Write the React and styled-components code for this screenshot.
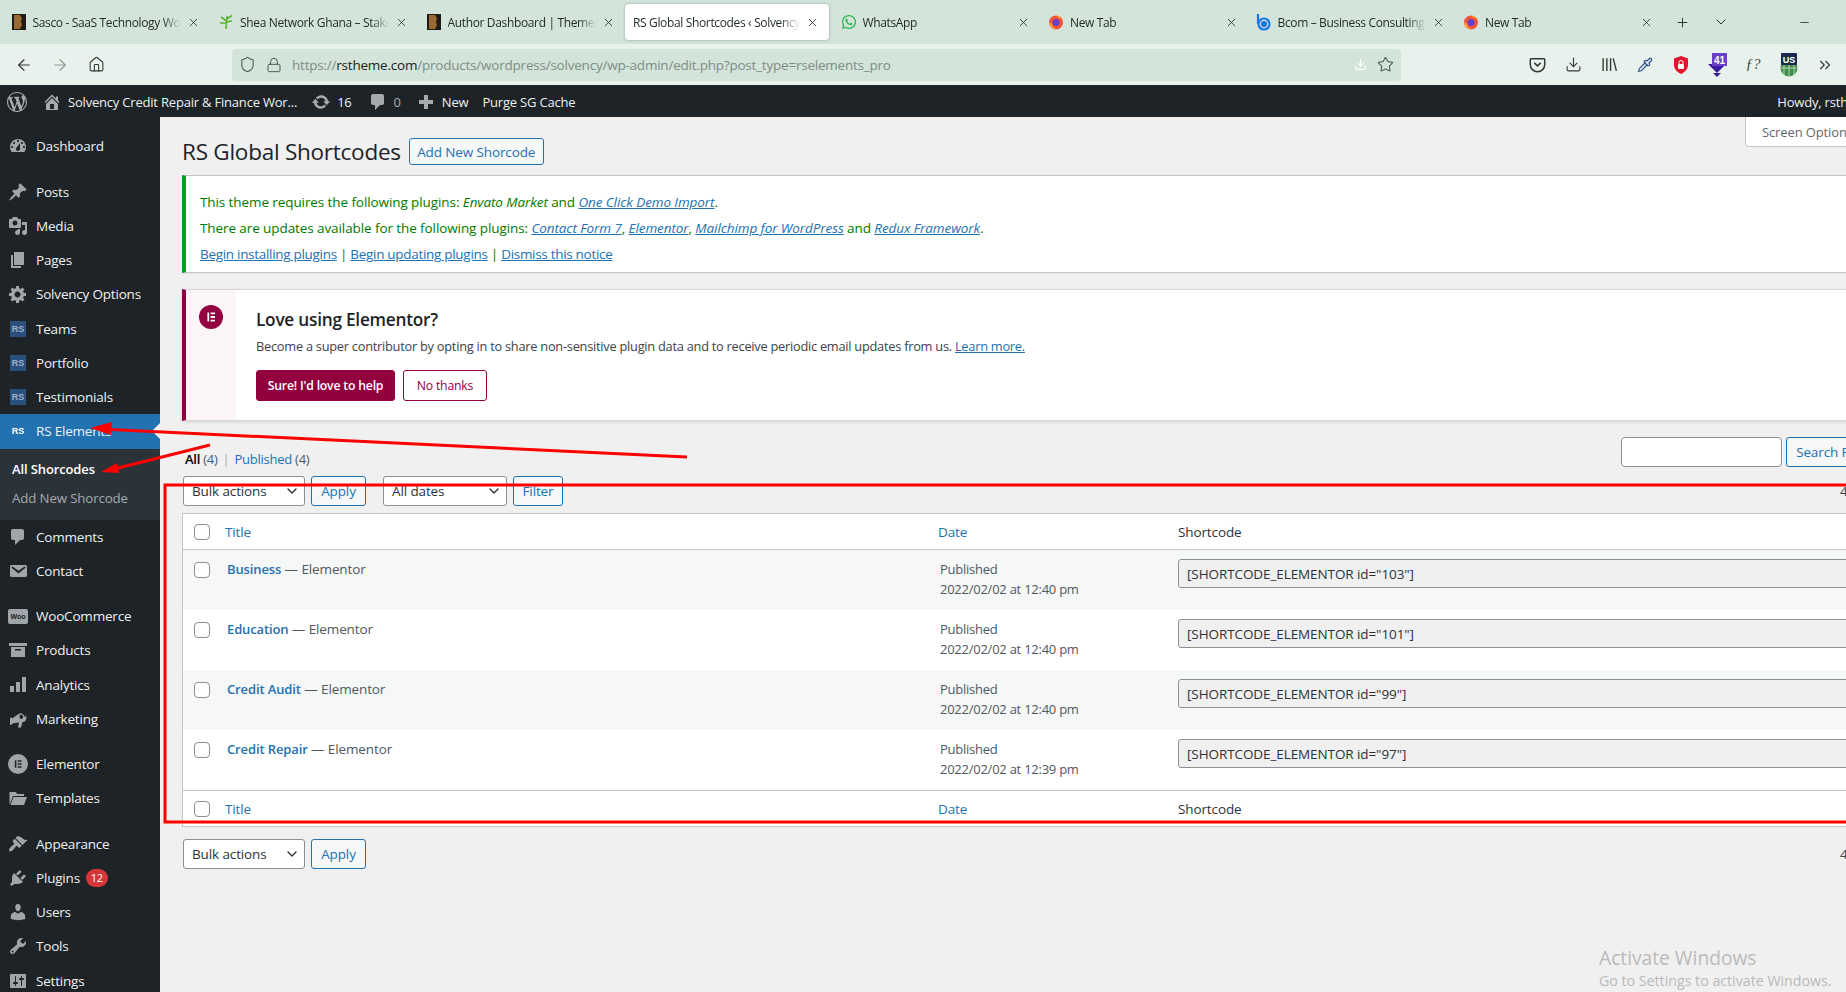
import React from "react";
import styled, { createGlobalStyle } from "styled-components";
import {
  ArrowLeft,
  ArrowRight,
  ChevronDown,
  ChevronsRight,
  Download,
  Home,
  Lock,
  Minus,
  Pipette,
  Plus,
  Shield,
  Star,
  X
} from "lucide-react";
import { FaWhatsapp } from "react-icons/fa";

const GlobalStyle = createGlobalStyle`
  html, body {
    margin: 0;
    height: 100%;
    overflow: hidden;
    background: #f0f0f1;
  }
  body {
    font-family: "Open Sans", "Noto Sans", sans-serif;
    font-size: 13.5px;
    letter-spacing: -0.12px;
    color: #3c434a;
  }
  * { box-sizing: border-box; }
`;

const Page = styled.div`
  position: relative;
  width: 1846px;
  height: 992px;
  overflow: hidden;
  display: flex;
  flex-direction: column;
`;

/* browser chrome */

const TabBar = styled.div`
  height: 44px;
  flex: none;
  display: flex;
  align-items: center;
  padding-left: 2.5px;
  background: #d3e4da;
`;

const Tab = styled.div`
  width: ${p => (p.$active ? "204px" : "207.5px")};
  margin-right: ${p => (p.$active ? "3.5px" : "0")};
  height: 36px;
  flex: none;
  display: flex;
  align-items: center;
  gap: 6px;
  padding: 0 10px 0 8px;
  border-radius: 4px;
  background: ${p => (p.$active ? "#fff" : "transparent")};
  box-shadow: ${p => (p.$active ? "0 0 3px rgba(0,0,0,.3)" : "none")};
  color: #1f2a24;
  font-size: 12px;
  letter-spacing: -0.35px;
`;

const TabTitle = styled.span`
  flex: 1;
  min-width: 0;
  white-space: nowrap;
  overflow: hidden;
  -webkit-mask-image: linear-gradient(to right, #000 88%, transparent);
  mask-image: linear-gradient(to right, #000 88%, transparent);
`;

const TabActions = styled.div`
  display: flex;
  align-items: center;
  color: #26332c;
`;

const TabAction = styled.span`
  width: 39px;
  display: flex;
  justify-content: center;
`;

const MinimizeAction = styled(TabAction)`
  margin-left: 44px;
`;

const Toolbar = styled.div`
  height: 41px;
  flex: none;
  display: flex;
  align-items: center;
  padding-left: 6px;
  background: #e8f1ec;
  color: #2b3a32;
`;

const ToolIcon = styled.span`
  width: 36px;
  height: 30px;
  flex: none;
  display: flex;
  align-items: center;
  justify-content: center;
  color: ${p => p.$color || "inherit"};
`;

const UrlBar = styled.div`
  width: 1169px;
  height: 32px;
  margin: 0 118px 0 118px;
  flex: none;
  display: flex;
  align-items: center;
  gap: 10px;
  padding: 0 7px;
  border-radius: 4px;
  background: #d3e4da;
  color: #4a5a51;
`;

const UrlText = styled.span`
  flex: 1;
  font-size: 13.5px;
  letter-spacing: -0.22px;
  color: #7f8d85;
  white-space: nowrap;
  b {
    font-weight: 400;
    color: #222;
  }
`;

const AdminBar = styled.div`
  height: 32px;
  flex: none;
  display: flex;
  align-items: center;
  padding-top: 1px;
  background: #1d2327;
  color: #f0f0f1;
  font-size: 13px;
  letter-spacing: -0.2px;
  white-space: nowrap;
  svg {
    flex: none;
    fill: #a7aaad;
  }
`;

const AdminItem = styled.span`
  display: flex;
  align-items: center;
  margin-left: ${p => p.$left || 0}px;
  color: ${p => (p.$muted ? "#a7aaad" : "inherit")};
`;

const Dash = ({ d, size = 20 }) => (
  <svg width={size} height={size} viewBox="0 0 20 20">
    <path d={d} />
  </svg>
);

/* wp sidebar */

const Body = styled.div`
  flex: 1;
  min-height: 0;
  display: flex;
`;

const Sidebar = styled.nav`
  width: 160px;
  flex: none;
  padding-top: 12.25px;
  background: #1d2327;
`;

const MenuItem = styled.div`
  position: relative;
  height: 34.25px;
  margin-top: ${p => (p.$sep ? "11px" : "0")};
  display: flex;
  align-items: center;
  padding-left: 8px;
  gap: 8px;
  font-size: 13.5px;
  letter-spacing: -0.2px;
  color: #f0f0f1;
  background: ${p => (p.$active ? "#2271b1" : "transparent")};
  svg {
    flex: none;
    fill: #a0a5aa;
  }
  &::after {
    content: ${p => (p.$active ? '""' : "none")};
    position: absolute;
    right: 0;
    top: 9px;
    border: 8px solid transparent;
    border-right-color: #f0f0f1;
  }
`;

const RsBadge = styled.span`
  width: 16px;
  height: 16px;
  margin: 0 2px;
  flex: none;
  display: flex;
  align-items: center;
  justify-content: center;
  background: ${p => (p.$active ? "transparent" : "#2b4f7e")};
  color: ${p => (p.$active ? "#fff" : "#9fb0c6")};
  font: 700 9px "Liberation Sans", sans-serif;
  letter-spacing: 0;
`;

const WooBadge = styled.span`
  width: 20px;
  height: 15px;
  flex: none;
  display: flex;
  align-items: center;
  justify-content: center;
  border-radius: 2px;
  background: #a0a5aa;
  color: #1d2327;
  font: 700 7px "Liberation Sans", sans-serif;
  letter-spacing: 0;
`;

const ElementorRound = styled.span`
  width: ${p => p.$size}px;
  height: ${p => p.$size}px;
  flex: none;
  display: flex;
  align-items: center;
  justify-content: center;
  border-radius: 50%;
  background: ${p => p.$bg};
  svg {
    fill: ${p => p.$fg};
  }
`;

const CountBadge = styled.span`
  min-width: 22px;
  height: 18px;
  margin-left: -2px;
  display: flex;
  align-items: center;
  justify-content: center;
  border-radius: 9px;
  background: #d63638;
  color: #fff;
  font-size: 11px;
`;

const SubMenu = styled.div`
  height: 71px;
  display: flex;
  flex-direction: column;
  justify-content: center;
  gap: 10px;
  padding: 0 0 0 12px;
  background: #2c3338;
`;

const SubItem = styled.div`
  line-height: 19px;
  font-size: ${p => (p.$current ? "13px" : "13.25px")};
  font-weight: ${p => (p.$current ? 600 : 400)};
  color: ${p => (p.$current ? "#fff" : "#a7aaad")};
`;

/* content */

const Main = styled.main`
  position: relative;
  flex: 1;
  min-width: 0;
  overflow: hidden;
`;

const Wrap = styled.div`
  width: 1703px;
  margin-left: 22px;
  padding-top: 21px;
`;

const ScreenTab = styled.div`
  position: absolute;
  top: 0;
  left: 1585px;
  width: 130px;
  height: 30px;
  display: flex;
  align-items: center;
  padding-left: 16px;
  border: 1px solid #c3c4c7;
  border-top: 0;
  border-radius: 0 0 4px 4px;
  background: #fff;
  font-size: 13px;
  color: #646970;
`;

const HeadingRow = styled.div`
  display: flex;
  align-items: center;
  gap: 8px;
  height: 27px;
`;

const Title = styled.h1`
  margin: 0;
  font-size: 22.5px;
  font-weight: 400;
  letter-spacing: -0.25px;
  color: #1d2327;
`;

const OutlineButton = styled.span`
  height: ${p => p.$h || 30}px;
  width: ${p => (p.$w ? `${p.$w}px` : "auto")};
  flex: none;
  display: inline-flex;
  align-items: center;
  justify-content: center;
  border: 1px solid #2271b1;
  border-radius: 3px;
  background: #f6f7f7;
  color: #2271b1;
  white-space: nowrap;
`;

const TgmNotice = styled.div`
  height: 98px;
  margin-top: 10px;
  padding: 16px 0 0 14px;
  border: 1px solid #c3c4c7;
  border-width: 1px 0;
  border-left: 4px solid #00a32a;
  background: #fff;
  box-shadow: 0 1px 1px rgba(0, 0, 0, 0.04);
`;

const NoticeLine = styled.p`
  margin: 0 0 6px;
  line-height: 20px;
  letter-spacing: ${p => (p.$tight ? "-0.3px" : "-0.09px")};
  color: #007a00;
  em {
    font-style: italic;
  }
  a {
    color: #2271b1;
    text-decoration: underline;
  }
`;

const ElementorNotice = styled.div`
  height: 132px;
  margin-top: 16px;
  display: flex;
  border: 1px solid #d5d5d7;
  border-width: 1px 0;
  border-left: 4px solid #93003f;
  background: #fff;
  box-shadow: 0 1px 3px rgba(0, 0, 0, 0.12);
`;

const NoticeAside = styled.div`
  width: 50px;
  flex: none;
  display: flex;
  justify-content: center;
  padding-top: 15px;
  background: rgba(147, 0, 63, 0.04);
`;

const NoticeBody = styled.div`
  padding: 18px 0 0 20px;
`;

const NoticeTitle = styled.h3`
  margin: 0;
  line-height: 24px;
  font-size: 17.25px;
  font-weight: 600;
  letter-spacing: -0.25px;
  color: #1d2327;
`;

const NoticeText = styled.p`
  margin: 3px 0 0;
  line-height: 22px;
  font-size: 12.8px;
  letter-spacing: -0.25px;
  color: #3c434a;
  a {
    color: #2271b1;
    text-decoration: underline;
  }
`;

const NoticeButtons = styled.div`
  display: flex;
  gap: 8px;
  margin-top: 13px;
`;

const NoticeButton = styled.span`
  height: 31px;
  width: ${p => p.$w}px;
  display: flex;
  align-items: center;
  justify-content: center;
  border: 1px solid #93003f;
  border-radius: 3px;
  background: ${p => (p.$solid ? "#93003f" : "#fff")};
  color: ${p => (p.$solid ? "#fff" : "#93003f")};
  font-size: 12.25px;
  letter-spacing: -0.2px;
  font-weight: ${p => (p.$solid ? 600 : 400)};
`;

const SearchRow = styled.div`
  height: 30px;
  margin-top: 16px;
  display: flex;
  align-items: center;
`;

const Subsubsub = styled.div`
  flex: 1;
  padding: 13px 0 0 3px;
  font-size: 13px;
  letter-spacing: -0.25px;
  color: #50575e;
  b {
    font-weight: 600;
    color: #000;
  }
  a {
    color: #2271b1;
  }
  i {
    margin: 0 5px;
    font-style: normal;
    color: #a7aaad;
  }
`;

const SearchInput = styled.input`
  width: 161px;
  height: 30px;
  margin-right: 4px;
  padding: 0 8px;
  border: 1px solid #8c8f94;
  border-radius: 4px;
  background: #fff;
`;

const TableNav = styled.div`
  height: 30px;
  margin-top: ${p => p.$top}px;
  display: flex;
  align-items: center;
`;

const FakeSelect = styled.span`
  width: ${p => p.$w}px;
  height: 30px;
  margin: 0 6px 0 ${p => p.$left || 1}px;
  flex: none;
  display: flex;
  align-items: center;
  justify-content: space-between;
  padding: 0 4px 0 8px;
  border: 1px solid #8c8f94;
  border-radius: 3px;
  background: #fff;
  color: #2c3338;
`;

const ItemCount = styled.span`
  margin-left: auto;
  color: #3c434a;
`;

const Table = styled.div`
  margin-top: 7px;
  border: 1px solid #c3c4c7;
  background: #fff;
`;

const HeadRow = styled.div`
  height: 36px;
  display: grid;
  grid-template-columns: 44px 705px 238px 1fr;
  align-items: center;
  border-${p => p.$edge}: 1px solid #c3c4c7;
`;

const Row = styled.div`
  height: 60px;
  display: grid;
  grid-template-columns: 44px 705px 238px 1fr;
  align-items: start;
  background: ${p => (p.$odd ? "#f6f7f7" : "#fff")};
`;

const Check = styled.input.attrs({ type: "checkbox" })`
  appearance: none;
  width: 16px;
  height: 16px;
  margin: ${p => (p.$top ? "12px" : "0")} 0 0 11px;
  display: block;
  border: 1px solid #8c8f94;
  border-radius: 4px;
  background: #fff;
`;

const SortLink = styled.span`
  margin-left: ${p => p.$left || 0}px;
  color: #2271b1;
`;

const PlainHead = styled.span`
  margin-left: 8px;
  color: #2c3338;
`;

const TitleCell = styled.div`
  padding-top: 9px;
  line-height: 20px;
  color: #50575e;
  b {
    font-size: 13px;
    font-weight: 600;
    color: #2271b1;
  }
`;

const DateCell = styled.div`
  padding: 9px 0 0 8px;
  line-height: 20px;
  font-size: 13px;
  letter-spacing: -0.25px;
  color: #50575e;
`;

const ShortcodeCell = styled.div`
  padding: 9px 0 0 8px;
`;

const ShortcodeInput = styled.input`
  width: 100%;
  height: 29px;
  padding: 0 8px;
  border: 1px solid #8c8f94;
  border-radius: 3px;
  background: #f0f0f1;
  color: #2c3338;
  font: inherit;
  letter-spacing: -0.09px;
`;

/* things lying over the page */

const Annotations = styled.svg`
  position: absolute;
  inset: 0;
  pointer-events: none;
`;

const Watermark = styled.div`
  position: absolute;
  left: 1599px;
  top: 945px;
  color: #b9babb;
  font-size: 14.2px;
  line-height: 20px;
  letter-spacing: 0;
  pointer-events: none;
  strong {
    display: block;
    font-size: 19.2px;
    font-weight: 400;
    line-height: 26px;
  }
`;

/* little drawings */

const BrownFav = () => (
  <svg width="16" height="16" viewBox="0 0 16 16">
    <rect x="1" width="14" height="16" fill="#1f1a14" />
    <path d="M3 1h6l2 3-1 4 1 3-2 4H3z" fill="#9a6a35" />
  </svg>
);

const TreeFav = () => (
  <svg width="16" height="16" viewBox="0 0 16 16" fill="none" stroke="#5cb531" strokeWidth="1.6">
    <path d="M8 15 9 2M8.500 7 3 3M8.700 5 14 1.500M8.300 9 2 9M8.400 8 14 7" />
  </svg>
);

const FirefoxFav = () => (
  <svg width="16" height="16" viewBox="0 0 16 16">
    <circle cx="8" cy="8.500" r="7" fill="#f0533b" />
    <path d="M8 1.500a7 7 0 0 1 7 7c0-1-.7-4-3-5.500.5 1 .5 1.500.2 2C11 3 9.500 2.500 8 1.500z" fill="#ffb220" />
    <circle cx="8" cy="8.500" r="3.500" fill="#6a3fc5" />
    <path d="M1 8.500a7 7 0 0 0 9 6.700c-3 .2-6-2.200-6-6z" fill="#ffa436" />
  </svg>
);

const BcomFav = () => (
  <svg width="16" height="18" viewBox="0 0 16 18" fill="none" stroke="#1977e5" strokeWidth="2.200">
    <path d="M2 1v10" />
    <circle cx="8" cy="11" r="5.500" />
    <circle cx="8" cy="11" r="2" fill="#1977e5" />
  </svg>
);

const PocketIcon = () => (
  <svg width="17" height="17" viewBox="0 0 16 16" fill="none" stroke="currentColor" strokeWidth="1.400">
    <path d="M2 2.500h12a.8.8 0 0 1 .8.8V8a6.800 6.800 0 0 1-13.600 0V3.300a.8.8 0 0 1 .8-.8z" />
    <path d="M5 6.500 8 9.300l3-2.800" />
  </svg>
);

const LibraryIcon = () => (
  <svg width="17" height="17" viewBox="0 0 16 16" fill="none" stroke="currentColor" strokeWidth="1.300">
    <path d="M2 2v12M5.500 2v12M9 2v12M11.500 2.200l3 11.800" />
  </svg>
);

const RedShield = () => (
  <svg width="16" height="18" viewBox="0 0 16 18">
    <path d="M8 0 15 2.500V9c0 4-3.500 7.500-7 9-3.500-1.500-7-5-7-9V2.500z" fill="#e8112d" />
    <rect x="5" y="8" width="6" height="5" rx="1" fill="#fff" />
    <path d="M6 8V6.500a2 2 0 0 1 4 0V8" fill="none" stroke="#fff" />
  </svg>
);

const PurpleBadge = () => (
  <svg width="20" height="24" viewBox="0 0 20 24">
    <path d="M1 11h18l-9 9z M6 20h8l-4 4z" fill="#3b1c9a" />
    <rect x="5" y="0" width="15" height="13" fill="#6b3fc9" />
    <text x="12.500" y="10.500" textAnchor="middle" fontSize="10" fontWeight="700" fill="#fff" fontFamily="Liberation Sans">41</text>
  </svg>
);

const FormulaIcon = styled.span`
  font: italic 15px "Liberation Serif", serif;
  color: #3c4a42;
`;

const GlobeBadge = () => (
  <svg width="20" height="24" viewBox="0 0 20 24">
    <circle cx="10" cy="15" r="8.500" fill="#3f8f4a" />
    <path d="M1.500 15h17M10 6.500v17M5 8v14M15 8v14" stroke="#cfe3d6" strokeWidth=".8" />
    <rect x="2" y="0" width="16" height="12" rx="1" fill="#1c2a52" />
    <text x="10" y="9.500" textAnchor="middle" fontSize="9" fontWeight="700" fill="#fff" fontFamily="Liberation Sans">US</text>
  </svg>
);

const ElementorGlyph = ({ size }) => (
  <svg width={size} height={size} viewBox="0 0 20 20">
    <path d="M5.500 4.500h2.200v11H5.500zM9.500 4.500h5.500v2.200H9.500zM9.500 8.900h5.500v2.200H9.500zM9.500 13.300h5.500v2.200H9.500z" />
  </svg>
);

const icons = {
  wp: "M20 10c0-5.510-4.490-10-10-10C4.480 0 0 4.490 0 10c0 5.520 4.480 10 10 10 5.510 0 10-4.480 10-10zM7.780 15.370L4.370 6.220c.55-.02 1.170-.08 1.170-.08.5-.06.44-1.130-.06-1.110 0 0-1.450.11-2.370.11-.18 0-.37 0-.58-.01C4.120 2.690 6.870 1.110 10 1.110c2.330 0 4.450.87 6.050 2.340-.68-.11-1.650.39-1.650 1.580 0 .74.45 1.360.9 2.100.35.61.55 1.360.55 2.460 0 1.490-1.400 5-1.400 5l-3.030-8.370c.54-.02.82-.17.82-.17.5-.05.44-1.250-.06-1.220 0 0-1.440.12-2.380.12-.87 0-2.330-.12-2.330-.12-.5-.03-.56 1.200-.06 1.220l.92.08 1.260 3.410zM17.410 10c.24-.64.74-1.870.43-4.250.7 1.290 1.050 2.710 1.050 4.250 0 3.290-1.730 6.240-4.400 7.780.97-2.590 1.940-5.200 2.920-7.780zM6.100 18.090C3.120 16.650 1.110 13.530 1.110 10c0-1.300.23-2.480.72-3.590C3.250 10.300 4.670 14.200 6.100 18.090zm4.030-6.630l2.580 6.980c-.86.29-1.760.45-2.710.45-.79 0-1.570-.11-2.290-.33.81-2.380 1.620-4.740 2.420-7.100z",
  home: "M16 8.500l1.530 1.530-1.060 1.060L10 4.620l-6.470 6.470-1.060-1.060L10 2.500l4 4v-2h2v4zm-6-2.460l6 5.990V18H4v-5.970zM12 17v-5H8v5h4z",
  update: "M10.200 3.280c3.530 0 6.430 2.610 6.920 6h2.080l-3.500 4-3.500-4h2.320c-.45-1.970-2.210-3.450-4.320-3.450-1.450 0-2.730.71-3.540 1.780L4.950 5.660C6.230 4.200 8.110 3.280 10.200 3.280zm-.4 13.440c-3.520 0-6.430-2.610-6.920-6H.8l3.500-4c1.170 1.330 2.330 2.670 3.500 4H5.480c.45 1.970 2.210 3.450 4.320 3.450 1.450 0 2.730-.71 3.540-1.780l1.710 1.950c-1.280 1.460-3.150 2.380-5.250 2.380z",
  comment: "M5 2h9c1.100 0 2 .9 2 2v7c0 1.100-.9 2-2 2h-2l-5 5v-5H5c-1.100 0-2-.9-2-2V4c0-1.100.9-2 2-2z",
  plus: "M17 8v4h-5v5H8v-5H3V8h5V3h4v5h5z",
  dashboard: "M3.760 16h12.480c1.100-1.370 1.760-3.110 1.760-5 0-4.420-3.580-8-8-8s-8 3.580-8 8c0 1.890.66 3.630 1.760 5zM10 4c.55 0 1 .45 1 1s-.45 1-1 1-1-.45-1-1 .45-1 1-1zM6 6c.55 0 1 .45 1 1s-.45 1-1 1-1-.45-1-1 .45-1 1-1zm8 0c.55 0 1 .45 1 1s-.45 1-1 1-1-.45-1-1 .45-1 1-1zm-5.370 5.550L12 7v6c0 1.100-.9 2-2 2s-2-.9-2-2c0-.57.24-1.080.63-1.450zM4 10c.55 0 1 .45 1 1s-.45 1-1 1-1-.45-1-1 .45-1 1-1zm12 0c.55 0 1 .45 1 1s-.45 1-1 1-1-.45-1-1 .45-1 1-1z",
  pin: "M10.440 3.020l1.820-1.820 6.360 6.350-1.830 1.820c-1.050-.68-2.480-.57-3.410.36l-.75.75c-.92.93-1.040 2.350-.35 3.410l-1.830 1.820-2.410-2.410-2.800 2.790c-.42.42-3.380 2.710-3.800 2.290s1.860-3.390 2.280-3.810l2.790-2.790L4.100 9.360l1.830-1.820c1.050.69 2.480.57 3.400-.36l.75-.75c.93-.92 1.050-2.350.36-3.410z",
  media: "M13 11V4c0-.55-.45-1-1-1h-1.670L9 1H5L3.670 3H2c-.55 0-1 .45-1 1v7c0 .55.45 1 1 1h10c.55 0 1-.45 1-1zM7 4.500c1.380 0 2.500 1.120 2.500 2.500S8.380 9.500 7 9.500 4.500 8.380 4.500 7 5.620 4.500 7 4.500zM14 6h5v10.500c0 1.380-1.120 2.500-2.500 2.500S14 17.880 14 16.500s1.120-2.500 2.500-2.500c.17 0 .34.02.5.05V9h-3V6zm-4 8.050V13h2v3.500c0 1.380-1.120 2.500-2.500 2.500S7 17.880 7 16.500 8.120 14 9.500 14c.17 0 .34.02.5.05z",
  page: "M6 15V2h10v13H6zm-1 1h8v2H3V5h2v11z",
  gear: "M18 12h-2.180c-.17.7-.44 1.350-.81 1.930l1.540 1.540-2.100 2.100-1.540-1.540c-.58.36-1.230.63-1.910.79V19H8v-2.180c-.68-.16-1.330-.43-1.910-.79l-1.540 1.540-2.120-2.120 1.540-1.540c-.36-.58-.63-1.230-.79-1.910H1V9.030h2.170c.16-.7.44-1.350.8-1.940L2.430 5.550l2.100-2.100 1.540 1.540c.58-.37 1.240-.64 1.930-.81V2h3v2.180c.68.16 1.330.43 1.910.79l1.540-1.540 2.120 2.120-1.540 1.540c.36.59.64 1.240.8 1.940H18V12zm-8.500 1.500c1.660 0 3-1.340 3-3s-1.340-3-3-3-3 1.340-3 3 1.340 3 3 3z",
  email: "M3.870 4h13.250C18.370 4 19 4.590 19 5.790v8.420c0 1.190-.63 1.790-1.880 1.790H3.870c-1.250 0-1.880-.6-1.880-1.790V5.790c0-1.200.63-1.790 1.880-1.790zm6.620 8.600l6.740-5.530c.24-.2.43-.66.13-1.070-.29-.41-.82-.42-1.170-.17l-5.700 3.860L4.800 5.830c-.35-.25-.88-.24-1.170.17-.3.41-.11.87.13 1.070z",
  archive: "M1 3h18v3H1zM3 7h14v10H3zm4 2v1.500h6V9z",
  bars: "M2 11h4v6H2zM8 7h4v10H8zM14 2h4v15h-4z",
  megaphone: "M18.150 5.940c.46 1.620.38 3.220-.02 4.480-.42 1.280-1.260 2.130-2.400 2.440-.4.11-.81.13-1.220.06l-1.500 5.580H9.980l1.100-4.610c-.4-.02-.73-.2-1.100-.35L4.500 14.500l-.5.900-2 .5v-7l2-.4.500.8 5-3.500c.36-.32.71-.62 1.100-.83.41-.21.78-.39 1.220-.51 1.140-.3 2.290.07 3.290.96 1 .87 1.760 2.180 2.040 3.020zM12.930 9.900c.5.2 1.120.05 1.620-.35.55-.45.65-1.420.42-2.200-.22-.79-.87-1.490-1.520-1.670-.65-.19-1.280.05-1.600.55-.45.7-.45 1.440-.16 2.300.2.6.65 1.190 1.240 1.370z",
  folder: "M1.500 4h6l2 2h6.500v2H5l-3 8H1.500zM5.500 9H19l-3 8H2.500z",
  brush: "M14.480 11.060L7.410 3.990l1.500-1.500c.5-.56 2.300-.47 3.510.32 1.210.8 1.430 1.280 2.910 2.100 1.180.64 2.450 1.260 4.450.85zm-.71.71L6.700 4.700 4.930 6.470c-.39.39-.39 1.020 0 1.410l1.060 1.060c.39.39.39 1.030 0 1.420-.6.6-1.430 1.110-2.210 1.690-.35.26-.7.53-1.010.84-1.340 1.340-2.370 3.070-1.370 4.070.99 1 2.720-.03 4.070-1.370.3-.31.58-.66.84-1.010.58-.78 1.090-1.610 1.690-2.210.39-.39 1.020-.39 1.410 0l1.060 1.060c.39.39 1.020.39 1.410 0z",
  plugin: "M13.110 4.360L9.870 7.600 8 5.730l3.240-3.240c.35-.34 1.050-.2 1.560.32.52.51.66 1.210.31 1.550zm-8 1.770l.91-1.120 9.010 9.010-1.190.84c-.71.71-2.630 1.160-3.820 1.160H6.140L4.900 17.260c-.59.59-1.540.59-2.120 0-.59-.58-.59-1.530 0-2.120l1.240-1.240v-3.880c0-1.130.4-3.190 1.090-3.890zm7.260 3.970l3.240-3.240c.34-.35 1.040-.21 1.550.31.52.51.66 1.210.31 1.550l-3.240 3.250z",
  users: "M10 9.250c-2.270 0-2.730-3.440-2.730-3.440C7 4.020 7.820 2 9.970 2c2.160 0 2.980 2.020 2.710 3.810 0 0-.41 3.440-2.680 3.440zm0 2.570L12.720 10c2.390 0 4.520 2.330 4.520 4.530v2.490s-3.650 1.130-7.240 1.130c-3.650 0-7.240-1.130-7.240-1.130v-2.490c0-2.250 1.940-4.480 4.470-4.480z",
  tools: "M16.680 9.770c-1.340 1.340-3.300 1.670-4.950.99l-5.410 6.520c-.99.99-2.590.99-3.580 0s-.99-2.590 0-3.570l6.520-5.420c-.68-1.650-.35-3.610.99-4.950 1.280-1.280 3.120-1.620 4.720-1.060l-2.890 2.890 2.820 2.820 2.860-2.870c.53 1.580.18 3.390-1.080 4.650zM3.810 16.210c.4.39 1.040.39 1.430 0 .4-.4.4-1.040 0-1.430-.39-.4-1.030-.4-1.430 0-.39.39-.39 1.030 0 1.430z",
  settings: "M18 16V4c0-.55-.45-1-1-1H3c-.55 0-1 .45-1 1v12c0 .55.45 1 1 1h14c.55 0 1-.45 1-1zM8 11h1c.55 0 1 .45 1 1s-.45 1-1 1H8v1.500c0 .28-.22.5-.5.5s-.5-.22-.5-.5V13H6c-.55 0-1-.45-1-1s.45-1 1-1h1V5.500c0-.28.22-.5.5-.5s.5.22.5.5V11zm5-2h-1c-.55 0-1-.45-1-1s.45-1 1-1h1V5.500c0-.28.22-.5.5-.5s.5.22.5.5V7h1c.55 0 1 .45 1 1s-.45 1-1 1h-1v5.500c0 .28-.22.5-.5.5s-.5-.22-.5-.5V9z"
};

const tabs = [
  { title: "Sasco - SaaS Technology WordPress Theme", fav: <BrownFav /> },
  { title: "Shea Network Ghana – Stakeholders", fav: <TreeFav /> },
  { title: "Author Dashboard | ThemeForest", fav: <BrownFav /> },
  { title: "RS Global Shortcodes ‹ Solvency Credit", active: true },
  { title: "WhatsApp", fav: <FaWhatsapp size={16} color="#25b34a" /> },
  { title: "New Tab", fav: <FirefoxFav /> },
  { title: "Bcom – Business Consulting WordPress", fav: <BcomFav /> },
  { title: "New Tab", fav: <FirefoxFav /> }
];

const menu = [
  { label: "Dashboard", icon: "dashboard" },
  { label: "Posts", icon: "pin", sep: true },
  { label: "Media", icon: "media" },
  { label: "Pages", icon: "page" },
  { label: "Solvency Options", icon: "gear" },
  { label: "Teams", rs: true },
  { label: "Portfolio", rs: true },
  { label: "Testimonials", rs: true },
  { label: "RS Elements", rs: true, active: true },
  { label: "Comments", icon: "comment" },
  { label: "Contact", icon: "email" },
  { label: "WooCommerce", woo: true, sep: true },
  { label: "Products", icon: "archive" },
  { label: "Analytics", icon: "bars" },
  { label: "Marketing", icon: "megaphone" },
  { label: "Elementor", elementor: true, sep: true },
  { label: "Templates", icon: "folder" },
  { label: "Appearance", icon: "brush", sep: true },
  { label: "Plugins", icon: "plugin", count: 12 },
  { label: "Users", icon: "users" },
  { label: "Tools", icon: "tools" },
  { label: "Settings", icon: "settings" }
];

const rows = [
  { name: "Business", id: 103, time: "12:40 pm" },
  { name: "Education", id: 101, time: "12:40 pm" },
  { name: "Credit Audit", id: 99, time: "12:40 pm" },
  { name: "Credit Repair", id: 97, time: "12:39 pm" }
];

const MenuGlyph = ({ item }) => {
  if (item.rs) return <RsBadge $active={item.active}>RS</RsBadge>;
  if (item.woo) return <WooBadge>Woo</WooBadge>;
  if (item.elementor) {
    return (
      <ElementorRound $size={20} $bg="#a0a5aa" $fg="#1d2327">
        <ElementorGlyph size={14} />
      </ElementorRound>
    );
  }
  return <Dash d={icons[item.icon]} />;
};

const BulkBar = ({ top, withDates }) => (
  <TableNav $top={top}>
    <FakeSelect $w={122}>
      Bulk actions <ChevronDown size={16} />
    </FakeSelect>
    <OutlineButton $w={55}>Apply</OutlineButton>
    {withDates && (
      <>
        <FakeSelect $w={124} $left={17}>
          All dates <ChevronDown size={16} />
        </FakeSelect>
        <OutlineButton $w={50}>Filter</OutlineButton>
      </>
    )}
    <ItemCount>4 items</ItemCount>
  </TableNav>
);

const TableHead = ({ edge }) => (
  <HeadRow $edge={edge}>
    <Check />
    <SortLink $left={-2}>Title</SortLink>
    <SortLink $left={6}>Date</SortLink>
    <PlainHead>Shortcode</PlainHead>
  </HeadRow>
);

const App = () => (
  <Page>
    <GlobalStyle />
    <TabBar>
      {tabs.map((tab, i) => (
        <Tab key={i} $active={tab.active}>
          {tab.fav}
          <TabTitle>{tab.title}</TabTitle>
          <X size={13} strokeWidth={1.5} />
        </Tab>
      ))}
      <TabActions>
        <TabAction>
          <Plus size={15} strokeWidth={1.5} />
        </TabAction>
        <TabAction>
          <ChevronDown size={16} strokeWidth={1.5} />
        </TabAction>
        <MinimizeAction>
          <Minus size={13} strokeWidth={1.5} />
        </MinimizeAction>
      </TabActions>
    </TabBar>

    <Toolbar>
      <ToolIcon>
        <ArrowLeft size={18} strokeWidth={1.5} />
      </ToolIcon>
      <ToolIcon $color="#8d9c94">
        <ArrowRight size={18} strokeWidth={1.5} />
      </ToolIcon>
      <ToolIcon>
        <Home size={17} strokeWidth={1.5} />
      </ToolIcon>
      <UrlBar>
        <Shield size={17} strokeWidth={1.5} />
        <Lock size={16} strokeWidth={1.5} />
        <UrlText>
          https://<b>rstheme.com</b>/products/wordpress/solvency/wp-admin/edit.php?post_type=rselements_pro
        </UrlText>
        <Download size={13} color="#fff" />
        <Star size={17} strokeWidth={1.5} />
      </UrlBar>
      <ToolIcon>
        <PocketIcon />
      </ToolIcon>
      <ToolIcon>
        <Download size={17} strokeWidth={1.5} />
      </ToolIcon>
      <ToolIcon>
        <LibraryIcon />
      </ToolIcon>
      <ToolIcon $color="#2f4f8f">
        <Pipette size={16} strokeWidth={1.8} />
      </ToolIcon>
      <ToolIcon>
        <RedShield />
      </ToolIcon>
      <ToolIcon>
        <PurpleBadge />
      </ToolIcon>
      <ToolIcon>
        <FormulaIcon>ƒ?</FormulaIcon>
      </ToolIcon>
      <ToolIcon>
        <GlobeBadge />
      </ToolIcon>
      <ToolIcon>
        <ChevronsRight size={18} strokeWidth={1.5} />
      </ToolIcon>
    </Toolbar>

    <AdminBar>
      <AdminItem $left={7}>
        <Dash d={icons.wp} />
      </AdminItem>
      <AdminItem $left={15}>
        <Dash d={icons.home} />
      </AdminItem>
      <AdminItem $left={6}>Solvency Credit Repair &amp; Finance Wor...</AdminItem>
      <AdminItem $left={14}>
        <Dash d={icons.update} />
      </AdminItem>
      <AdminItem $left={6}>16</AdminItem>
      <AdminItem $left={16}>
        <Dash d={icons.comment} />
      </AdminItem>
      <AdminItem $left={6} $muted>
        0
      </AdminItem>
      <AdminItem $left={15}>
        <Dash d={icons.plus} />
      </AdminItem>
      <AdminItem $left={6}>New</AdminItem>
      <AdminItem $left={14}>Purge SG Cache</AdminItem>
      <AdminItem $left={1202}>Howdy, rstheme</AdminItem>
    </AdminBar>

    <Body>
      <Sidebar>
        {menu.map(item => (
          <React.Fragment key={item.label}>
            <MenuItem $sep={item.sep} $active={item.active}>
              <MenuGlyph item={item} />
              {item.label}
              {item.count && <CountBadge>{item.count}</CountBadge>}
            </MenuItem>
            {item.active && (
              <SubMenu>
                <SubItem $current>All Shorcodes</SubItem>
                <SubItem>Add New Shorcode</SubItem>
              </SubMenu>
            )}
          </React.Fragment>
        ))}
      </Sidebar>

      <Main>
        <ScreenTab>Screen Options</ScreenTab>
        <Wrap>
          <HeadingRow>
            <Title>RS Global Shortcodes</Title>
            <OutlineButton $h={27} $w={135}>
              Add New Shorcode
            </OutlineButton>
          </HeadingRow>

          <TgmNotice>
            <NoticeLine>
              This theme requires the following plugins: <em>Envato Market</em> and{" "}
              <a><em>One Click Demo Import</em></a>.
            </NoticeLine>
            <NoticeLine>
              There are updates available for the following plugins: <a><em>Contact Form 7</em></a>,{" "}
              <a><em>Elementor</em></a>, <a><em>Mailchimp for WordPress</em></a> and{" "}
              <a><em>Redux Framework</em></a>.
            </NoticeLine>
            <NoticeLine $tight>
              <a>Begin installing plugins</a> | <a>Begin updating plugins</a> | <a>Dismiss this notice</a>
            </NoticeLine>
          </TgmNotice>

          <ElementorNotice>
            <NoticeAside>
              <ElementorRound $size={24} $bg="#93003f" $fg="#fff">
                <ElementorGlyph size={16} />
              </ElementorRound>
            </NoticeAside>
            <NoticeBody>
              <NoticeTitle>Love using Elementor?</NoticeTitle>
              <NoticeText>
                Become a super contributor by opting in to share non-sensitive plugin data and to receive
                periodic email updates from us. <a>Learn more.</a>
              </NoticeText>
              <NoticeButtons>
                <NoticeButton $solid $w={139}>
                  Sure! I'd love to help
                </NoticeButton>
                <NoticeButton $w={84}>No thanks</NoticeButton>
              </NoticeButtons>
            </NoticeBody>
          </ElementorNotice>

          <SearchRow>
            <Subsubsub>
              <b>All</b> (4)<i>|</i>
              <a>Published</a> (4)
            </Subsubsub>
            <SearchInput />
            <OutlineButton $w={99}>Search Posts</OutlineButton>
          </SearchRow>

          <BulkBar top={9} withDates />

          <Table>
            <TableHead edge="bottom" />
            {rows.map((row, i) => (
              <Row key={row.id} $odd={i % 2 === 0}>
                <Check $top />
                <TitleCell>
                  <b>{row.name}</b> — Elementor
                </TitleCell>
                <DateCell>
                  Published
                  <br />
                  2022/02/02 at {row.time}
                </DateCell>
                <ShortcodeCell>
                  <ShortcodeInput readOnly value={`[SHORTCODE_ELEMENTOR id="${row.id}"]`} />
                </ShortcodeCell>
              </Row>
            ))}
            <TableHead edge="top" />
          </Table>

          <BulkBar top={12} />
        </Wrap>
      </Main>
    </Body>

    <Annotations width="1846" height="992">
      <path d="M1850 485H165V822H1850" fill="none" stroke="#f00" strokeWidth="3" />
      <path d="M687 457 100 429" stroke="#f00" strokeWidth="3" />
      <path d="M90 428 112 422 111 435z" fill="#f00" />
      <path d="M210 445 110 470" stroke="#f00" strokeWidth="3" />
      <path d="M101 472 117 463 119 473z" fill="#f00" />
    </Annotations>

    <Watermark>
      <strong>Activate Windows</strong>
      Go to Settings to activate Windows.
    </Watermark>
  </Page>
);

export default App;
